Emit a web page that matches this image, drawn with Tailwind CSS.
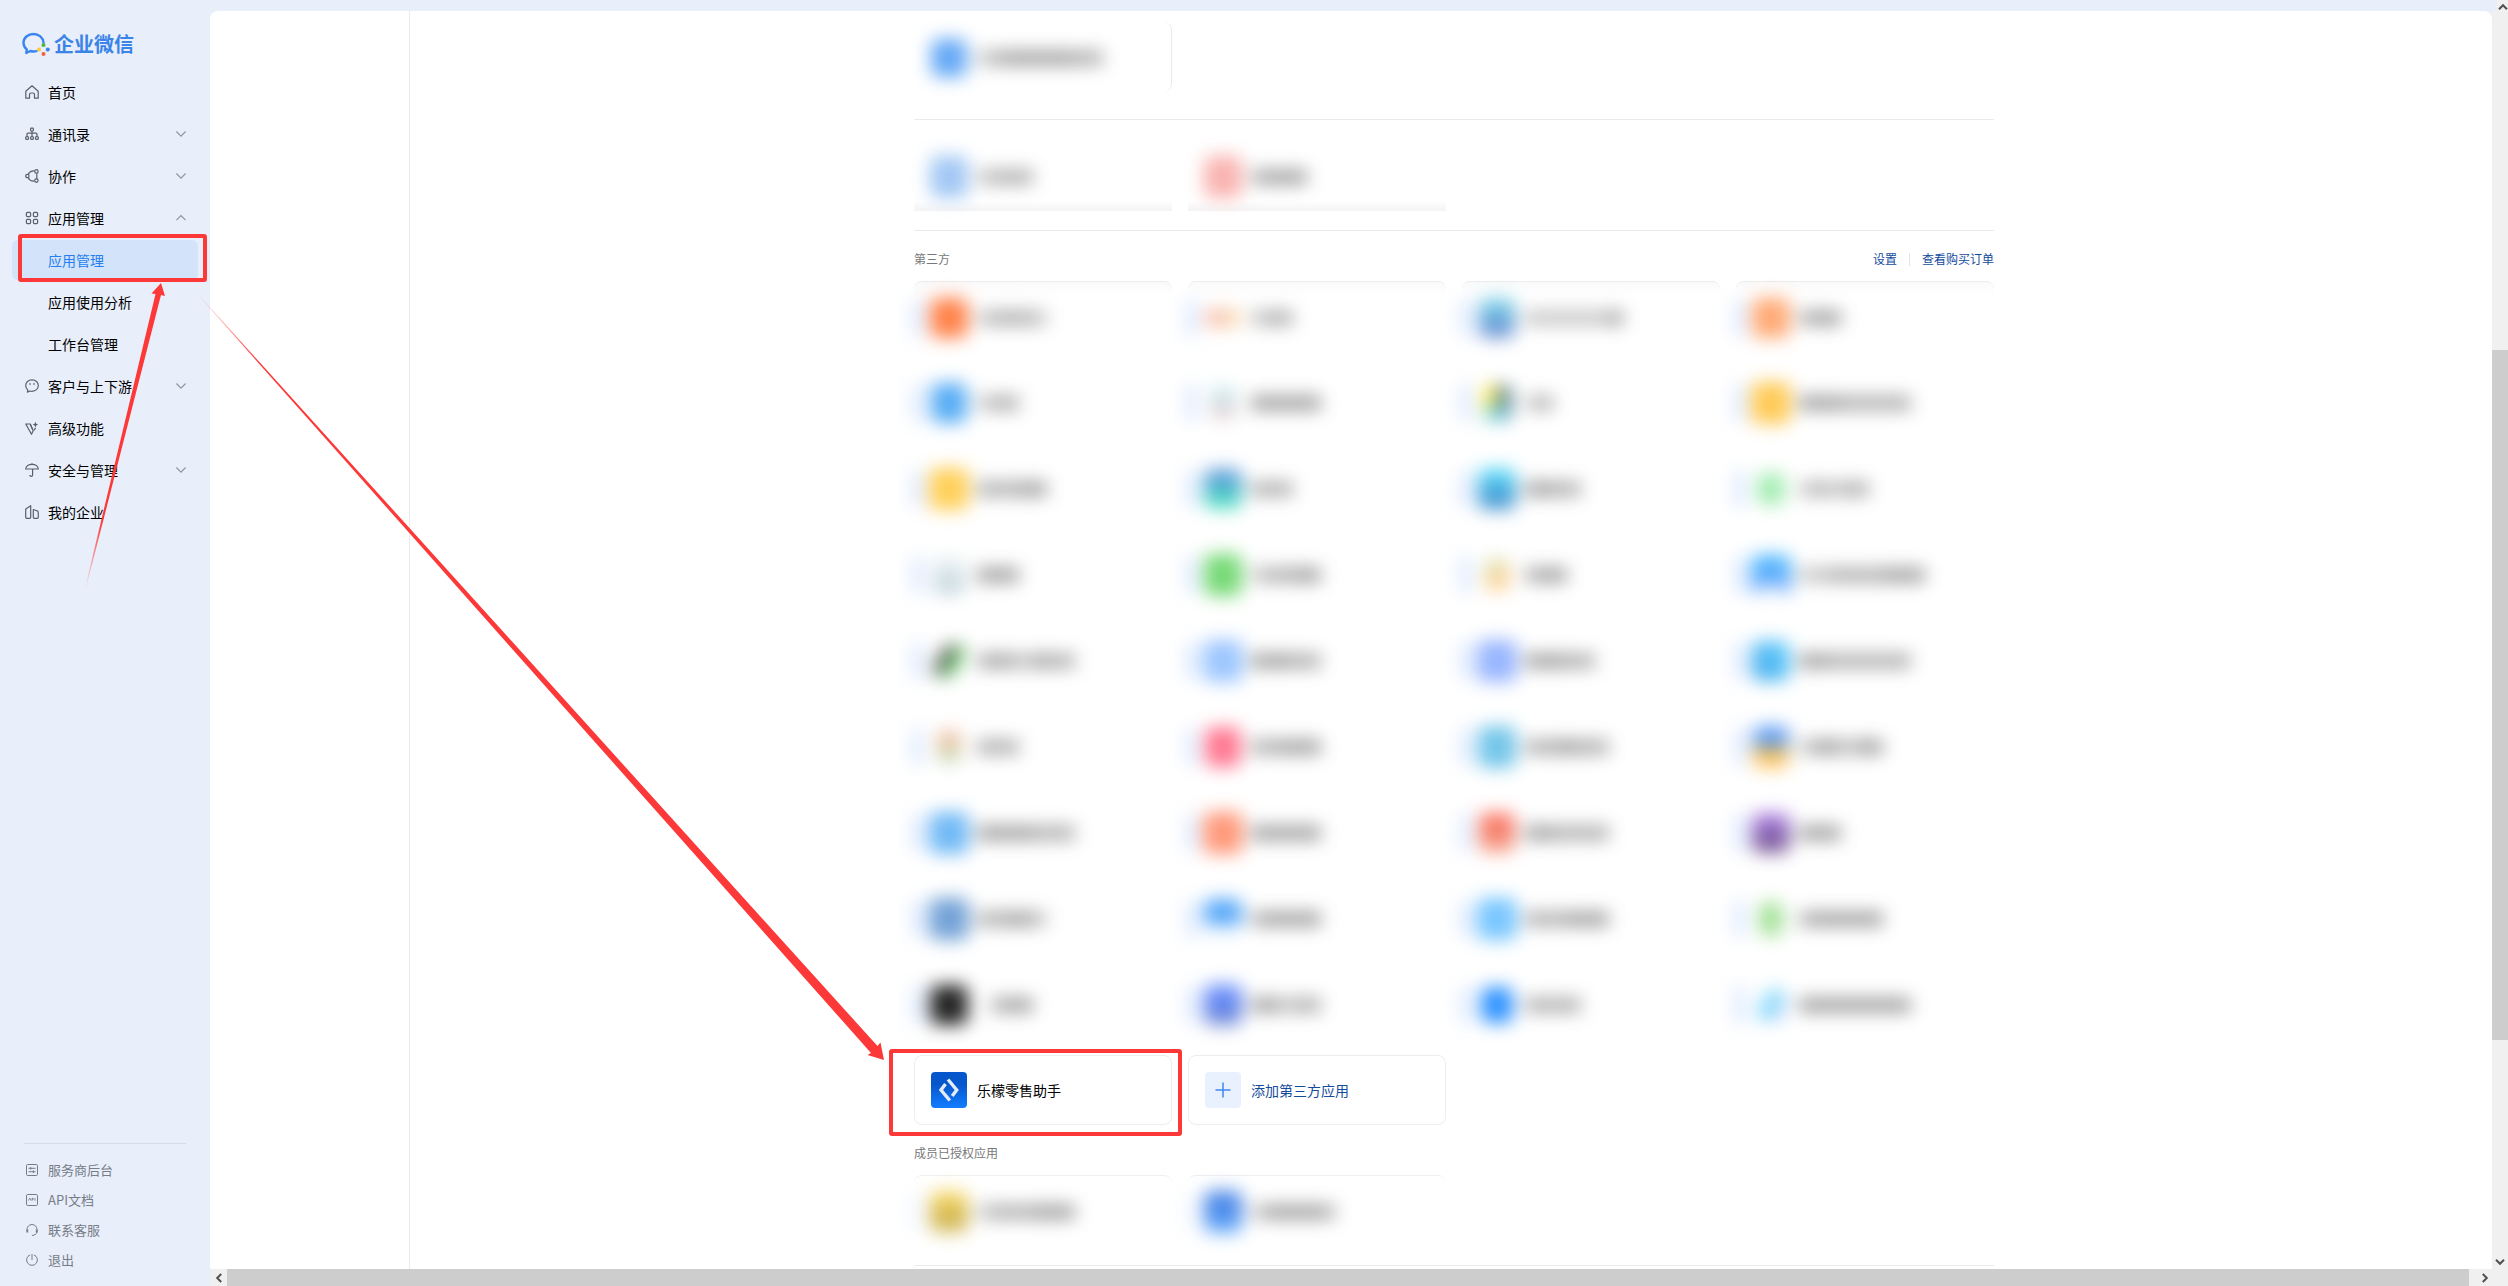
<!DOCTYPE html>
<html lang="zh-CN">
<head>
    <meta charset="UTF-8">
    <meta name="viewport" content="width=device-width, initial-scale=1.0">
    <title>企业微信 - 应用管理</title>
    <script src="https://cdn.jsdelivr.net/npm/@tailwindcss/browser@4"></script>
</head>
<body class="relative flex h-screen overflow-hidden bg-[#e8eefa] font-['Noto_Sans_CJK_SC',sans-serif] text-sm text-black">
    <!-- Sidebar -->
    <aside class="flex w-[210px] shrink-0 flex-col">
        <a href="#" class="mt-8 flex h-6 items-center gap-1 pl-[22px] text-[20px] font-bold text-[#3a84e8]">
            <svg class="h-6 w-7 shrink-0" viewBox="0 0 28 24" fill="none">
                <path d="M21.5 10.5C21 5.500 16.800 2 11.500 2 6 2 1.500 5.800 1.500 10.800c0 2.700 1.300 5 3.300 6.600L4.300 21l4-2c2 .6 4.300.6 6.200.1" stroke="#3a84f0" stroke-width="2.400" stroke-linecap="round" stroke-linejoin="round"/>
                <path d="M21.500 13l4.500 4.500-4.500 4.500-4.300-4.500z" stroke="#d9e3ee" stroke-width="1"/>
                <circle cx="21.500" cy="13" r="2" fill="#4fb83c"/>
                <circle cx="25.800" cy="17.500" r="2" fill="#3a84f0"/>
                <circle cx="21.500" cy="22" r="2" fill="#f0633a"/>
                <circle cx="17" cy="17.500" r="2" fill="#fbc93a"/>
            </svg>
            <span>企业微信</span>
        </a>

        <nav class="mx-3 mt-4">
            <ul class="flex flex-col gap-0.5">
                <li>
                    <a href="#" class="flex h-10 items-center gap-[9px] pl-[13px] pr-3">
                        <svg class="h-3.5 w-3.5" viewBox="0 0 14 14" fill="none" stroke="#5b616b" stroke-width="1.200" stroke-linejoin="round"><path d="M.8 6.200L7 .8l6.200 5.400v7H9.500V9.500a1.500 1.500 0 0 0-1.500-1.500H6A1.500 1.500 0 0 0 4.500 9.500v3.700H.8z"/></svg>
                        <span>首页</span>
                    </a>
                </li>
                <li>
                    <a href="#" class="flex h-10 items-center gap-[9px] pl-[13px] pr-3">
                        <svg class="h-3.5 w-3.5" viewBox="0 0 14 14" fill="none" stroke="#5b616b" stroke-width="1.200"><rect x="5.600" y="1.200" width="2.800" height="2.800" rx=".8"/><path d="M7 4v2.200M2 9V7.200a1 1 0 0 1 1-1h8a1 1 0 0 1 1 1V9M7 6.200V9"/><rect x=".7" y="9.600" width="2.800" height="2.800" rx=".9"/><rect x="5.600" y="9.600" width="2.800" height="2.800" rx=".9"/><rect x="10.500" y="9.600" width="2.800" height="2.800" rx=".9"/></svg>
                        <span class="flex-1">通讯录</span>
                        <svg class="h-2 w-2.5" viewBox="0 0 10 8" fill="none" stroke="#8f96a3" stroke-width="1.200"><path d="M.4 1.500L5 6.200l4.600-4.700"/></svg>
                    </a>
                </li>
                <li>
                    <a href="#" class="flex h-10 items-center gap-[9px] pl-[13px] pr-3">
                        <svg class="h-3.5 w-3.5" viewBox="0 0 14 14" fill="none" stroke="#5b616b" stroke-width="1.200"><circle cx="11.400" cy="2.400" r="1.700"/><circle cx="2.400" cy="7" r="1.700"/><circle cx="11.400" cy="11.600" r="1.700"/><path d="M9.600 2C7 1.500 4.600 2.800 3.200 5.300M3.200 8.700C4.600 11.300 7 12.500 9.600 12M11.800 4.200v5.700"/></svg>
                        <span class="flex-1">协作</span>
                        <svg class="h-2 w-2.5" viewBox="0 0 10 8" fill="none" stroke="#8f96a3" stroke-width="1.200"><path d="M.4 1.500L5 6.200l4.600-4.700"/></svg>
                    </a>
                </li>
                <li>
                    <a href="#" class="flex h-10 items-center gap-[9px] pl-[13px] pr-3">
                        <svg class="h-3.5 w-3.5" viewBox="0 0 14 14" fill="none" stroke="#5b616b" stroke-width="1.200"><rect x="1.400" y="1.400" width="4.200" height="4.200" rx="1"/><rect x="8.400" y="1.400" width="4.200" height="4.200" rx="1"/><rect x="1.400" y="8.400" width="4.200" height="4.200" rx="1"/><rect x="8.400" y="8.400" width="4.200" height="4.200" rx="1"/></svg>
                        <span class="flex-1">应用管理</span>
                        <svg class="h-2 w-2.5" viewBox="0 0 10 8" fill="none" stroke="#8f96a3" stroke-width="1.200"><path d="M.4 6.200L5 1.500l4.600 4.700"/></svg>
                    </a>
                </li>
                <li class="relative">
                    <a href="#" class="flex h-10 items-center rounded-md bg-[#d3e4fa] pl-9 text-[#267ef0]">应用管理</a>
                    <div class="absolute -top-1.5 -right-[9px] -bottom-0.5 left-1.5 rounded-[3px] border-4 border-[#fd3838]"></div>
                </li>
                <li><a href="#" class="flex h-10 items-center pl-9">应用使用分析</a></li>
                <li><a href="#" class="flex h-10 items-center pl-9">工作台管理</a></li>
                <li>
                    <a href="#" class="flex h-10 items-center gap-[9px] pl-[13px] pr-3">
                        <svg class="h-3.5 w-3.5" viewBox="0 0 14 14" fill="none" stroke="#5b616b" stroke-width="1.200" stroke-linejoin="round"><path d="M7 .9C3.400.9.700 3.300.700 6.500c0 1.900.8 3.400 2.100 4.500l-.4 2.200 2.300-1.200c.7.200 1.500.3 2.300.3 3.600 0 6.300-2.400 6.300-5.800S10.600.9 7 .9z"/><path d="M5 4.300v1.400M9 4.300v1.400" stroke-width="1.400"/></svg>
                        <span class="flex-1">客户与上下游</span>
                        <svg class="h-2 w-2.5" viewBox="0 0 10 8" fill="none" stroke="#8f96a3" stroke-width="1.200"><path d="M.4 1.500L5 6.200l4.600-4.700"/></svg>
                    </a>
                </li>
                <li>
                    <a href="#" class="flex h-10 items-center gap-[9px] pl-[13px] pr-3">
                        <svg class="h-3.5 w-3.5" viewBox="0 0 14 14" fill="none" stroke="#5b616b" stroke-width="1.200" stroke-linejoin="round"><path d="M.8 3h4.400l3 6.800-1.700 3.400z"/><path d="M5.200 3l2.200 5M8.800 9.500l1.800-2.700"/><path d="M10.400.8l.8 2 1.900.8-1.900.8-.8 2-.8-2-1.900-.8 1.900-.8z" fill="#5b616b" stroke="none"/></svg>
                        <span>高级功能</span>
                    </a>
                </li>
                <li>
                    <a href="#" class="flex h-10 items-center gap-[9px] pl-[13px] pr-3">
                        <svg class="h-3.5 w-3.5" viewBox="0 0 14 14" fill="none" stroke="#5b616b" stroke-width="1.200" stroke-linejoin="round"><path d="M.7 6C1 3.200 3.700 1.300 7 1.300S13 3.200 13.300 6z"/><path d="M7 .2v1M7.600 6v6c0 1.700-2.800 1.700-2.800 0"/></svg>
                        <span class="flex-1">安全与管理</span>
                        <svg class="h-2 w-2.5" viewBox="0 0 10 8" fill="none" stroke="#8f96a3" stroke-width="1.200"><path d="M.4 1.500L5 6.200l4.600-4.700"/></svg>
                    </a>
                </li>
                <li>
                    <a href="#" class="flex h-10 items-center gap-[9px] pl-[13px] pr-3">
                        <svg class="h-3.5 w-3.5" viewBox="0 0 14 14" fill="none" stroke="#5b616b" stroke-width="1.200" stroke-linejoin="round"><path d="M.7 4L5.700.7v11.600a1 1 0 0 1-1 1h-3a1 1 0 0 1-1-1zM8.300 4.500l3.300 1.200a2 2 0 0 1 1.700 2v4.600a1 1 0 0 1-1 1h-3a1 1 0 0 1-1-1z"/></svg>
                        <span>我的企业</span>
                    </a>
                </li>
            </ul>
        </nav>

        <div class="mx-6 mt-auto border-t border-[#d6ddea]"></div>
        <ul class="mt-[11px] mb-[11px] pl-[26px] text-[13px] text-[#777d88]">
            <li>
                <a href="#" class="flex h-[30px] items-center gap-2.5">
                    <svg class="h-3 w-3" viewBox="0 0 12 12" fill="none" stroke="#777d88"><rect x=".5" y=".5" width="11" height="11" rx="1.200"/><path d="M2.500 4.300h7M2.500 7.700h7M4.700 3v2.600M7.300 6.400V9"/></svg>
                    <span>服务商后台</span>
                </a>
            </li>
            <li>
                <a href="#" class="flex h-[30px] items-center gap-2.5">
                    <svg class="h-3 w-3" viewBox="0 0 12 12" fill="none" stroke="#777d88"><rect x=".5" y=".5" width="11" height="11" rx="1.200"/><path d="M2.500 6.500L3.700 4l1.200 2.500M6 6.800V4.300h1.200v1.300H6M9 4v2.800" stroke-width=".8"/></svg>
                    <span>API文档</span>
                </a>
            </li>
            <li>
                <a href="#" class="flex h-[30px] items-center gap-2.5">
                    <svg class="h-3 w-3" viewBox="0 0 12 12" fill="none" stroke="#777d88"><path d="M1 7V5.500a5 5 0 0 1 10 0V7c0 2-1 3.500-3 4M6 11.300h2"/><path d="M1.300 5.500v3M10.700 5.500v3" stroke-width="1.800"/></svg>
                    <span>联系客服</span>
                </a>
            </li>
            <li>
                <a href="#" class="flex h-[30px] items-center gap-2.5">
                    <svg class="h-3 w-3" viewBox="0 0 12 12" fill="none" stroke="#777d88"><path d="M4 .9a5.400 5.400 0 1 0 4 0M6 0v6"/></svg>
                    <span>退出</span>
                </a>
            </li>
        </ul>
    </aside>

    <!-- Main area -->
    <div class="flex min-w-0 flex-1 flex-col">
        <div class="flex h-[11px] shrink-0 justify-end">
            <div class="flex w-[11px] items-end justify-center bg-[#f0f0f0]">
                <svg class="h-2 w-2.5" viewBox="0 0 10 8" fill="none" stroke="#505050" stroke-width="2"><path d="M1 6.200l4-4 4 4"/></svg>
            </div>
        </div>

        <div class="flex min-h-0 flex-1">
            <div class="flex min-w-0 flex-1 flex-col">
                <main class="flex min-h-0 flex-1 overflow-hidden rounded-t-lg bg-white">
                    <div class="w-[200px] shrink-0 border-r border-[#ebebeb]"></div>
                    <div class="flex flex-1 justify-center pt-[11px] pl-1.5">
                        <div class="w-[1080px] shrink-0">
                            <ul id="builtin" class="grid grid-cols-4 gap-4"></ul>
                            <hr class="mt-[27px] border-[#ebebeb]">
                            <ul id="custom" class="mt-[21px] grid grid-cols-4 gap-4"></ul>
                            <hr class="mt-[19px] border-[#ebebeb]">

                            <div class="flex h-[50px] items-center justify-between pt-1.5 text-xs">
                                <h2 class="text-[#787878]">第三方</h2>
                                <div class="flex items-center text-[#144c9c]">
                                    <a href="#">设置</a>
                                    <span class="mx-3 h-[13px] border-l border-[#e4e4e4]"></span>
                                    <a href="#">查看购买订单</a>
                                </div>
                            </div>
                            <ul id="thirdParty" class="grid grid-cols-4 gap-4">
                                <li class="relative order-1 flex h-[70px] items-center gap-2.5 rounded-lg border border-[#ebedf0] pl-4">
                                    <svg class="h-9 w-9" viewBox="0 0 36 36">
                                        <defs>
                                            <linearGradient id="lemeng" x1="0" y1="0" x2="0" y2="1"><stop offset=".35" stop-color="#0657cc"/><stop offset="1" stop-color="#127dff"/></linearGradient>
                                        </defs>
                                        <rect width="36" height="36" rx="4" fill="url(#lemeng)"/>
                                        <path d="M14.500 12L10 18l8.800 10.500" fill="none" stroke="#e4ecfb" stroke-width="3.400"/>
                                        <path d="M17 7.500L25.700 18l-4.500 6" fill="none" stroke="#e4ecfb" stroke-width="3.400"/>
                                    </svg>
                                    <span>乐檬零售助手</span>
                                    <div class="absolute -top-[7px] -right-[11px] -bottom-3 -left-[26px] rounded-[3px] border-4 border-[#fd3838]"></div>
                                </li>
                                <li class="order-1">
                                    <button class="flex h-[70px] w-full items-center gap-2.5 rounded-lg border border-[#ebedf0] pl-4 text-[#144c9c]">
                                        <span class="flex h-9 w-9 items-center justify-center rounded bg-[#eaf1fe]">
                                            <svg class="h-4 w-4" viewBox="0 0 16 16" stroke="#3f88f2" stroke-width="1.500"><path d="M8 .5v15M.5 8h15"/></svg>
                                        </span>
                                        <span>添加第三方应用</span>
                                    </button>
                                </li>
                            </ul>

                            <div class="flex h-[50px] items-center pt-1.5 text-xs">
                                <h2 class="text-[#787878]">成员已授权应用</h2>
                            </div>
                            <ul id="authorized" class="grid grid-cols-4 gap-4"></ul>
                            <hr class="mt-5 border-[#ebebeb]">
                        </div>
                    </div>
                </main>

                <!-- Horizontal scrollbar -->
                <div class="flex h-[17px] shrink-0 bg-[#f0f0f0]">
                    <div class="flex w-[17px] items-center justify-center">
                        <svg class="h-2.5 w-2" viewBox="0 0 8 10" fill="none" stroke="#505050" stroke-width="2"><path d="M6.200 1l-4 4 4 4"/></svg>
                    </div>
                    <div class="flex-1 bg-[#cdcdcd]"></div>
                    <div class="flex w-[23px] items-center justify-center pl-2">
                        <svg class="h-2.5 w-2" viewBox="0 0 8 10" fill="none" stroke="#505050" stroke-width="2"><path d="M1.800 1l4 4-4 4"/></svg>
                    </div>
                </div>
            </div>

            <!-- Vertical scrollbar -->
            <div class="flex w-4 shrink-0 flex-col items-center bg-[#f0f0f0] pb-5">
                <div class="h-[27%] w-full"></div>
                <div class="h-[55%] w-full bg-[#cdcdcd]"></div>
                <svg class="mt-auto h-2 w-2.5" viewBox="0 0 10 8" fill="none" stroke="#505050" stroke-width="2"><path d="M1 1.800l4 4 4-4"/></svg>
            </div>
        </div>
    </div>

    <!-- Pointer arrows -->
    <svg class="pointer-events-none absolute top-0 left-0 h-[1286px] w-[1000px]" viewBox="0 0 1000 1286" fill="none">
        <defs>
            <linearGradient id="tailShort" gradientUnits="userSpaceOnUse" x1="85" y1="588" x2="101" y2="520"><stop stop-color="#fd3838" stop-opacity="0"/><stop offset="1" stop-color="#fd3838"/></linearGradient>
            <linearGradient id="tailLong" gradientUnits="userSpaceOnUse" x1="198" y1="294" x2="260" y2="363"><stop stop-color="#fd3838" stop-opacity="0"/><stop offset="1" stop-color="#fd3838"/></linearGradient>
        </defs>
        <path d="M161 283l4 13-4-1L86 588h-1l70.500-294-4-.5z" fill="url(#tailShort)"/>
        <path d="M884 1060l-3.500-17.500-3 3.500L198 294v1l673 758-3.500 2z" fill="url(#tailLong)"/>
    </svg>

    <script>
        // Masked apps: icon background, icon width, icon height, ink density of each label character
        const builtinApps = [
            ['#4a9af4', 36, 38, '123333322']
        ];
        const customApps = [
            ['#92bef2', 38, 42, '1222'],
            ['#f8a6a2', 38, 42, '2333']
        ];
        const thirdPartyApps = [
            ['#ff6e2c', 38, 40, '12221'],
            ['linear-gradient(90deg,#f8a08c,#f3c4a8,#fbda98)', 36, 18, '122'],
            ['linear-gradient(#74d8e8,#4e98d4 55%,#5a7ccc)', 36, 40, '1111113'],
            ['#ff9c5e', 38, 40, '233'],

            ['#3c9ff3', 36, 40, '122'],
            ['linear-gradient(#bdebed,#e0c4cc)', 26, 32, '33333'],
            ['conic-gradient(#4a727a 0 25%,#50c0e8 50%,#70d4cc 60%,#ffe840 75% 100%)', 30, 36, '12'],
            ['#ffc23c', 40, 42, '33322222'],

            ['#ffc83e', 40, 42, '22233'],
            ['linear-gradient(#5080dc,#2eaec4 50%,#40e8b8)', 38, 40, '222'],
            ['linear-gradient(#50e4ff,#2494d4 60%,#3a86c8)', 38, 42, '3322'],
            ['#94eaa6', 28, 32, '12122'],

            ['linear-gradient(#eef5f5,#b0c8d4)', 32, 38, '333'],
            ['#5fd35f', 38, 42, '12233'],
            ['linear-gradient(150deg,#c0e4b8,#fdce8c 60%)', 26, 32, '233'],
            ['radial-gradient(circle at 50% 110%,#ffffff 16%,#4c98fa 40%,#20b4ff)', 40, 40, '112222333'],

            ['linear-gradient(120deg,#ffffff 15%,#303430 40%,#48bc48 60%,#ffffff 85%)', 34, 32, '2321322'],
            ['#8cbdff', 40, 42, '33322'],
            ['#86a9ff', 40, 42, '33322'],
            ['linear-gradient(60deg,#249ae6,#4cc8ff)', 38, 40, '33222222'],

            ['linear-gradient(#f0a890,#ddc498,#b0dcbc)', 24, 32, '222'],
            ['#ff6280', 36, 40, '22333'],
            ['#5cbce6', 38, 42, '223322'],
            ['linear-gradient(#4890f8 35%,#708884 50%,#ffbc48 64%)', 36, 42, '133133'],

            ['#5aaef4', 40, 42, '3333222'],
            ['#ff8864', 40, 42, '33333'],
            ['linear-gradient(#ff5a48,#f06c54 50%,#f9a48c)', 36, 40, '332222'],
            ['linear-gradient(#ac74ec,#6e469e 55%,#684484)', 38, 40, '333'],

            ['#5c93d0', 40, 42, '22331'],
            ['linear-gradient(#3898f8 58%,#f4f9ff 72%)', 38, 40, '23333'],
            ['#62bdff', 40, 42, '222333'],
            ['#94dc86', 24, 34, '233333'],

            ['#000000', 38, 40, '0233'],
            ['linear-gradient(#648eff,#406aea 55%,#788ccc)', 38, 42, '33122'],
            ['#0a80ff', 32, 36, '2222'],
            ['linear-gradient(120deg,#ffffff 15%,#78d4fa 40%,#78d4fa 60%,#d4d4fa 85%)', 30, 32, '33333333']
        ];
        const authorizedApps = [
            ['linear-gradient(#ffdc58,#c4a42c 65%,#dcc468)', 38, 42, '1222333'],
            ['linear-gradient(#2870e0,#3078e8 50%,#54a6ff)', 38, 42, '133332']
        ];
        const ink = ['transparent', '#b8b8b8', '#9c9c9c', '#8a8a8a'];

        // frame: classes of the card edge, strip: classes of the bar at the card's left
        function renderApps(id, apps, frame, strip) {
            const html = apps.map(([icon, w, h, label], i) => `
                <li class="h-[70px] ${i < 4 ? frame : ''}">
                    <div class="flex h-full items-center gap-2.5 pt-0.5 opacity-85 blur-[9px]" aria-hidden="true">
                        <span class="h-9 w-[7px] ${strip}"></span>
                        <span class="flex h-9 w-9 items-center justify-center">
                            <span class="shrink-0 rounded-lg" style="background:${icon};width:${w}px;height:${h}px"></span>
                        </span>
                        <span class="flex">
                            ${[...label].map(c => `<span class="h-3.5 w-3.5" style="background:${ink[c]}"></span>`).join('')}
                        </span>
                    </div>
                </li>`).join('');
            document.getElementById(id).insertAdjacentHTML('afterbegin', html);
        }

        renderApps('builtin', builtinApps, 'rounded-lg border-r border-[#ebebeb]', 'bg-transparent');
        renderApps('custom', customApps, 'bg-linear-to-t from-[#f4f4f4] to-white to-15%', 'bg-transparent');
        renderApps('thirdParty', thirdPartyApps, 'rounded-lg border-t border-[#ececec] bg-linear-to-b from-[#fafafa] to-white to-20%', 'bg-[#bcd4fd]');
        renderApps('authorized', authorizedApps, 'rounded-lg border-t border-[#f0f0f2]', 'bg-[#e4edfd]');
    </script>
</body>
</html>
